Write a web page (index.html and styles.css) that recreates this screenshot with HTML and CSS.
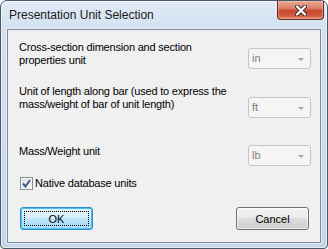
FILE: index.html
```html
<!DOCTYPE html>
<html lang="en">
<head>
  <meta charset="UTF-8">
  <meta name="viewport" content="width=device-width, initial-scale=1">
  <title>Presentation Unit Selection</title>
  <link rel="stylesheet" href="styles.css">
</head>
<body>
  <div class="window">
    <div class="titlebar">
      <span class="title">Presentation Unit Selection</span>
      <div class="close">
        <svg width="12" height="11" viewBox="0 0 12 11">
          <path d="M2 1.5 L10 9.5 M10 1.5 L2 9.5" stroke="#3a2a28" stroke-width="4" stroke-linecap="round"/>
          <path d="M2 1.5 L10 9.5 M10 1.5 L2 9.5" stroke="#ffffff" stroke-width="2.2" stroke-linecap="round"/>
        </svg>
      </div>
    </div>

    <div class="client">
      <div class="row row-section">
        <label class="caption">Cross-section dimension and section<br>properties unit</label>
        <div class="combo">in<span class="arrow"></span></div>
      </div>

      <div class="row row-length">
        <label class="caption">Unit of length along bar (used to express the<br>mass/weight of bar of unit length)</label>
        <div class="combo">ft<span class="arrow"></span></div>
      </div>

      <div class="row row-mass">
        <label class="caption">Mass/Weight unit</label>
        <div class="combo">lb<span class="arrow"></span></div>
      </div>

      <div class="check-row">
        <span class="checkbox">
          <svg width="9" height="9" viewBox="0 0 9 9">
            <path d="M1 4.5 L3.5 7.5 L8 1" fill="none" stroke="#3f5a92" stroke-width="2"/>
          </svg>
        </span>
        <span class="check-label">Native database units</span>
      </div>

      <div class="buttons">
        <button class="btn btn-default"><span class="focus">OK</span></button>
        <button class="btn">Cancel</button>
      </div>
    </div>
  </div>
</body>
</html>
```

FILE: styles.css
```css
body {
  margin: 0;
  font-family: 'Liberation Sans', Arial, sans-serif;
}
.window {
  width: 328px;
  height: 249px;
  box-sizing: border-box;
  border: 1px solid #4a5868;
  border-radius: 7px 7px 4px 4px;
  background: linear-gradient(#e2ebf6, #d3e1f1 28px, #c6d7ec);
  box-shadow: inset 0 0 0 1px rgba(255,255,255,0.55);
  padding: 0 6px 5px 6px;
  display: flex;
  flex-direction: column;
}
.titlebar {
  height: 28px;
  display: flex;
  align-items: flex-start;
  margin: 0 -3px 0 2px;
}
.title {
  font-family: 'Segoe UI', 'Liberation Sans', sans-serif;
  font-size: 12px;
  color: #1a1a1a;
  margin-top: 7px;
}
.close {
  margin-left: auto;
  width: 47px;
  height: 19px;
  box-sizing: border-box;
  border: 1px solid #5e2a22;
  border-top: none;
  border-radius: 0 0 4px 4px;
  background: linear-gradient(#e9a995, #dc8068 40%, #c8452c 55%, #d15a3c 80%, #e08a67);
  box-shadow: inset 0 0 0 1px rgba(255,220,200,0.35);
  display: flex;
  align-items: center;
  justify-content: center;
}
.client {
  flex: 1;
  border: 1px solid #7f8c9b;
  background: #f0f0f0;
  box-shadow: 0 0 0 1px rgba(255,255,255,0.5);
  padding: 11px 9px 0 11px;
  font-size: 11px;
  letter-spacing: -0.2px;
  line-height: 13px;
  color: #000;
}
.row {
  display: flex;
  justify-content: space-between;
  align-items: flex-start;
}
.row-length {
  margin-top: 16px;
}
.row-length .combo {
  margin-top: 12px;
}
.row-section .combo {
  margin-top: 7px;
}
.row-mass {
  margin-top: 27px;
}
.combo {
  width: 63px;
  height: 21px;
  box-sizing: border-box;
  border: 1px solid #c5c5c5;
  border-radius: 3px;
  background: #f5f5f5;
  color: #808080;
  padding: 0 6px 0 3px;
  display: flex;
  align-items: center;
  justify-content: space-between;
  letter-spacing: 0;
}
.arrow {
  width: 0;
  height: 0;
  border-left: 3px solid transparent;
  border-right: 3px solid transparent;
  border-top: 3px solid #a3a3a3;
  margin-top: 1px;
}
.check-row {
  margin-top: 11px;
  margin-left: 1px;
  display: flex;
  align-items: center;
  gap: 2px;
}
.checkbox {
  width: 13px;
  height: 13px;
  box-sizing: border-box;
  border: 1px solid #8e8f8f;
  background: linear-gradient(135deg, #dcdcdc, #fbfbfb);
  box-shadow: inset 0 0 0 1px #f4f4f4;
  display: flex;
  align-items: center;
  justify-content: center;
}
.buttons {
  margin-top: 17px;
  margin-left: 1px;
  margin-right: 2px;
  display: flex;
  justify-content: space-between;
}
.btn {
  width: 73px;
  height: 23px;
  box-sizing: border-box;
  border: 1px solid #707070;
  border-radius: 3px;
  background: linear-gradient(#f2f2f2, #ebebeb 45%, #dddddd 50%, #cfcfcf);
  box-shadow: inset 0 0 0 1px rgba(255,255,255,0.6);
  font-family: 'Liberation Sans', Arial, sans-serif;
  font-size: 11px;
  color: #000;
  padding: 0;
}
.btn-default {
  border-color: #2c8fc9;
  background: linear-gradient(#e8f5fc, #d9f0fc 45%, #bee6fd 50%, #a7d9f5);
  box-shadow: inset 0 0 0 1px #4fc0ea;
  padding: 3px;
}
.focus {
  display: flex;
  height: 100%;
  box-sizing: border-box;
  border: 1px dotted #000;
  align-items: center;
  justify-content: center;
}
```
